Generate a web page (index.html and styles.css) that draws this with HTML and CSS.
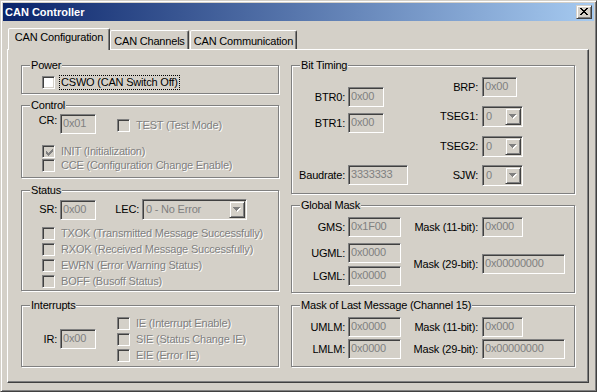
FILE: index.html
```html
<!DOCTYPE html>
<html lang="en">
<head>
    <meta charset="UTF-8">
    <title>CAN Controller</title>
    <link rel="stylesheet" href="styles.css">
</head>
<body>
    <div class="window">
        <div class="titlebar">
            <span class="title">CAN Controller</span>
            <span class="close">
                <svg width="8" height="7" viewBox="0 0 8 7" shape-rendering="crispEdges">
                    <path fill="#000" d="M0 0h2v1H0zM6 0h2v1H6zM1 1h2v1H1zM5 1h2v1H5zM2 2h4v1H2zM3 3h2v1H3zM2 4h4v1H2zM1 5h2v1H1zM5 5h2v1H5zM0 6h2v1H0zM6 6h2v1H6z"/>
                </svg>
            </span>
        </div>

        <div class="client">
            <div class="tabs">
                <div class="tab active tab-config">CAN Configuration</div>
                <div class="tab tab-channels">CAN Channels</div>
                <div class="tab tab-comm">CAN Communication</div>
            </div>

            <div class="panel">
                <!-- left column -->
                <div class="col col-left">
                    <fieldset class="group power">
                        <legend>Power</legend>
                        <div class="body">
                            <label class="chk">
                                <span class="box"></span>
                                <span class="text focus">CSWO (CAN Switch Off)</span>
                            </label>
                        </div>
                    </fieldset>

                    <fieldset class="group control">
                        <legend>Control</legend>
                        <div class="body">
                            <div class="row">
                                <span class="lbl lbl-s">CR:</span>
                                <span class="edit w-36">0x01</span>
                                <label class="chk off test">
                                    <span class="box"></span>
                                    <span class="text">TEST (Test Mode)</span>
                                </label>
                            </div>
                            <div class="list tight">
                                <label class="chk off">
                                    <span class="box"><svg class="tick" width="7" height="7" viewBox="0 0 7 7" shape-rendering="crispEdges"><path d="M0 2h1v3H0zM1 3h1v3H1zM2 4h1v3H2zM3 3h1v3H3zM4 2h1v3H4zM5 1h1v3H5zM6 0h1v3H6z"/></svg></span>
                                    <span class="text">INIT (Initialization)</span>
                                </label>
                                <label class="chk off">
                                    <span class="box"></span>
                                    <span class="text">CCE (Configuration Change Enable)</span>
                                </label>
                            </div>
                        </div>
                    </fieldset>

                    <fieldset class="group status">
                        <legend>Status</legend>
                        <div class="body">
                            <div class="row">
                                <span class="lbl lbl-s">SR:</span>
                                <span class="edit w-36">0x00</span>
                                <span class="lbl lbl-lec">LEC:</span>
                                <span class="combo w-105">
                                    <span class="val">0 - No Error</span>
                                    <span class="drop"><svg width="8" height="5" viewBox="0 0 8 5" shape-rendering="crispEdges"><path class="hi" transform="translate(1 1)" d="M0 0h7v1h-1v1h-1v1h-1v1h-1v-1h-1v-1h-1v-1h-1z"/><path class="lo" d="M0 0h7v1h-1v1h-1v1h-1v1h-1v-1h-1v-1h-1v-1h-1z"/></svg></span>
                                </span>
                            </div>
                            <div class="list wide">
                                <label class="chk off"><span class="box"></span><span class="text">TXOK (Transmitted Message Successfully)</span></label>
                                <label class="chk off"><span class="box"></span><span class="text">RXOK (Received Message Successfully)</span></label>
                                <label class="chk off"><span class="box"></span><span class="text">EWRN (Error Warning Status)</span></label>
                                <label class="chk off"><span class="box"></span><span class="text">BOFF (Busoff Status)</span></label>
                            </div>
                        </div>
                    </fieldset>

                    <fieldset class="group interrupts">
                        <legend>Interrupts</legend>
                        <div class="body">
                            <div class="row">
                                <span class="lbl lbl-s">IR:</span>
                                <span class="edit w-36">0x00</span>
                            </div>
                            <div class="list wide irq">
                                <label class="chk off"><span class="box"></span><span class="text">IE (Interrupt Enable)</span></label>
                                <label class="chk off"><span class="box"></span><span class="text">SIE (Status Change IE)</span></label>
                                <label class="chk off"><span class="box"></span><span class="text">EIE (Error IE)</span></label>
                            </div>
                        </div>
                    </fieldset>
                </div>

                <!-- right column -->
                <div class="col col-right">
                    <fieldset class="group timing">
                        <legend>Bit Timing</legend>
                        <div class="body">
                            <div class="sub sub-left">
                                <div class="row r-btr0"><span class="lbl lbl-m">BTR0:</span><span class="edit w-36">0x00</span></div>
                                <div class="row r-btr1"><span class="lbl lbl-m">BTR1:</span><span class="edit w-36">0x00</span></div>
                                <div class="row r-baud"><span class="lbl lbl-m">Baudrate:</span><span class="edit w-60">3333333</span></div>
                            </div>
                            <div class="sub sub-right">
                                <div class="row r-brp"><span class="lbl lbl-r">BRP:</span><span class="edit w-35">0x00</span></div>
                                <div class="row r-seg"><span class="lbl lbl-r">TSEG1:</span><span class="combo w-41"><span class="val">0</span><span class="drop"><svg width="8" height="5" viewBox="0 0 8 5" shape-rendering="crispEdges"><path class="hi" transform="translate(1 1)" d="M0 0h7v1h-1v1h-1v1h-1v1h-1v-1h-1v-1h-1v-1h-1z"/><path class="lo" d="M0 0h7v1h-1v1h-1v1h-1v1h-1v-1h-1v-1h-1v-1h-1z"/></svg></span></span></div>
                                <div class="row r-seg"><span class="lbl lbl-r">TSEG2:</span><span class="combo w-41"><span class="val">0</span><span class="drop"><svg width="8" height="5" viewBox="0 0 8 5" shape-rendering="crispEdges"><path class="hi" transform="translate(1 1)" d="M0 0h7v1h-1v1h-1v1h-1v1h-1v-1h-1v-1h-1v-1h-1z"/><path class="lo" d="M0 0h7v1h-1v1h-1v1h-1v1h-1v-1h-1v-1h-1v-1h-1z"/></svg></span></span></div>
                                <div class="row r-sjw"><span class="lbl lbl-r">SJW:</span><span class="combo w-41"><span class="val">0</span><span class="drop"><svg width="8" height="5" viewBox="0 0 8 5" shape-rendering="crispEdges"><path class="hi" transform="translate(1 1)" d="M0 0h7v1h-1v1h-1v1h-1v1h-1v-1h-1v-1h-1v-1h-1z"/><path class="lo" d="M0 0h7v1h-1v1h-1v1h-1v1h-1v-1h-1v-1h-1v-1h-1z"/></svg></span></span></div>
                            </div>
                        </div>
                    </fieldset>

                    <fieldset class="group global">
                        <legend>Global Mask</legend>
                        <div class="body">
                            <div class="sub sub-left">
                                <div class="row r-gms"><span class="lbl lbl-m">GMS:</span><span class="edit w-53">0x1F00</span></div>
                                <div class="row r-ugml"><span class="lbl lbl-m">UGML:</span><span class="edit w-53">0x0000</span></div>
                                <div class="row r-lgml"><span class="lbl lbl-m">LGML:</span><span class="edit w-53">0x0000</span></div>
                            </div>
                            <div class="sub sub-right">
                                <div class="row r-m11"><span class="lbl lbl-r">Mask (11-bit):</span><span class="edit w-41">0x000</span></div>
                                <div class="row r-m29"><span class="lbl lbl-r">Mask (29-bit):</span><span class="edit w-83">0x00000000</span></div>
                            </div>
                        </div>
                    </fieldset>

                    <fieldset class="group last">
                        <legend>Mask of Last Message (Channel 15)</legend>
                        <div class="body">
                            <div class="sub sub-left">
                                <div class="row r-first"><span class="lbl lbl-m">UMLM:</span><span class="edit w-53">0x0000</span></div>
                                <div class="row r-second"><span class="lbl lbl-m">LMLM:</span><span class="edit w-53">0x0000</span></div>
                            </div>
                            <div class="sub sub-right">
                                <div class="row r-first"><span class="lbl lbl-r">Mask (11-bit):</span><span class="edit w-41">0x000</span></div>
                                <div class="row r-second"><span class="lbl lbl-r">Mask (29-bit):</span><span class="edit w-83">0x00000000</span></div>
                            </div>
                        </div>
                    </fieldset>
                </div>
            </div>
        </div>
    </div>
</body>
</html>
```

FILE: styles.css
```css
:root {
    --face: #D4D0C8;
    --shadow: #808080;
    --dark: #404040;
    --light: #FFFFFF;
    --gray-text: #808080;
}

* {
    box-sizing: border-box;
}

body {
    margin: 0;
    background-color: var(--face);
    font-family: 'Liberation Sans', Arial, sans-serif;
    font-size: 11px;
    letter-spacing: -0.2px;
    color: #000;
}

/* window frame */
.window {
    width: 597px;
    height: 392px;
    padding: 2px;
    border: 1px solid;
    border-color: var(--face) var(--dark) var(--dark) var(--face);
    box-shadow: inset 1px 1px 0 var(--light), inset -1px -1px 0 var(--shadow);
    background-color: var(--face);
    display: flex;
    flex-direction: column;
}

.titlebar {
    height: 18px;
    display: flex;
    align-items: center;
    padding-left: 2px;
    background: linear-gradient(to right, #0A246A, #A6CAF0);
}

.title {
    color: #fff;
    font-weight: bold;
    line-height: 13px;
    letter-spacing: 0;
}

.close {
    margin-left: auto;
    margin-right: 2px;
    width: 16px;
    height: 14px;
    display: flex;
    align-items: center;
    justify-content: center;
    background-color: var(--face);
    border: 1px solid;
    border-color: var(--face) var(--dark) var(--dark) var(--face);
    box-shadow: inset 1px 1px 0 var(--light), inset -1px -1px 0 var(--shadow);
}

.close svg {
    display: block;
    margin-top: -1px;
}

.client {
    padding-left: 4px;
}

/* tabs */
.tabs {
    height: 28px;
    display: flex;
    align-items: flex-end;
    padding-left: 1px;
}

.tab {
    height: 19px;
    padding-top: 4px;
    line-height: 13px;
    text-align: center;
    border: 1px solid;
    border-bottom: none;
    border-color: var(--light) var(--dark) transparent var(--light);
    border-radius: 2px 2px 0 0;
    box-shadow: inset -1px 0 0 var(--shadow);
    background-color: var(--face);
}

.tab.active {
    height: 22px;
    margin-bottom: -1px;
    padding-top: 2px;
    position: relative;
    z-index: 1;
}

.tab-config { width: 102px; }
.tab-channels { width: 79px; }
.tab-comm { width: 107px; margin-left: 1px; }

.panel {
    width: 582px;
    height: 334px;
    padding: 9px 0 0 13px;
    border: 1px solid;
    border-color: var(--light) var(--dark) var(--dark) var(--light);
    box-shadow: inset -1px -1px 0 var(--shadow);
    display: flex;
    gap: 12px;
}

.col {
    display: flex;
    flex-direction: column;
}

.col-left { width: 258px; }
.col-right { width: 284px; }

/* group boxes */
.group {
    margin: 0;
    padding: 0;
    min-width: 0;
    border: 1px solid var(--shadow);
    box-shadow: 1px 1px 0 var(--light), inset 1px 1px 0 var(--light);
}

.group legend {
    margin-left: 8px;
    padding: 0 1px;
    line-height: 13px;
    background-color: var(--face);
}

.power { height: 35px; }
.control { height: 79px; margin-top: 5px; }
.status { height: 107px; margin-top: 6px; }
.interrupts { height: 68px; margin-top: 8px; }

.timing { height: 135px; }
.global { height: 94px; margin-top: 5px; }
.last { height: 68px; margin-top: 6px; }

.power .body {
    padding: 4px 0 0 20px;
}

.control .body,
.status .body {
    padding-top: 2px;
}

.row {
    display: flex;
    align-items: center;
}

.lbl {
    flex: none;
    text-align: right;
    margin-right: 3px;
    line-height: 13px;
    white-space: nowrap;
}

.lbl-s { width: 35px; }
.lbl-lec { width: 43px; }
.lbl-m { width: 53px; }
.lbl-r { width: 68px; margin-right: 4px; }

/* checkboxes */
.chk {
    display: flex;
    align-items: center;
    height: 13px;
}

.box {
    flex: none;
    width: 13px;
    height: 13px;
    padding: 2px;
    border: 1px solid;
    border-color: var(--shadow) var(--light) var(--light) var(--shadow);
    box-shadow: inset 1px 1px 0 var(--dark), inset -1px -1px 0 var(--face);
    background-color: #fff;
}

.tick {
    display: block;
    margin: 1px 0 0 1px;
    fill: var(--gray-text);
}

.chk .text {
    margin-left: 5px;
    padding: 0 1px;
    line-height: 13px;
    white-space: nowrap;
}

.chk .focus {
    outline: 1px dotted #000;
}

.chk.off .box {
    background-color: var(--face);
}

.chk.off .text {
    color: var(--gray-text);
    text-shadow: 1px 1px 0 var(--light);
}

.control .row {
    align-items: flex-start;
}

.chk.test {
    margin: 5px 0 0 21px;
}

.list {
    display: flex;
    flex-direction: column;
    padding-left: 20px;
}

.list.tight {
    margin-top: 11px;
    gap: 1px;
}

.list.wide {
    margin-top: 7px;
    gap: 3px;
}

/* edits and combos */
.edit {
    flex: none;
    height: 20px;
    padding: 0 2px;
    line-height: 17px;
    border: 1px solid;
    border-color: var(--shadow) var(--light) var(--light) var(--shadow);
    box-shadow: inset 1px 1px 0 var(--dark), inset -1px -1px 0 var(--face);
    color: var(--gray-text);
    white-space: nowrap;
    overflow: hidden;
}

.w-35 { width: 35px; }
.w-36 { width: 36px; }
.w-41 { width: 41px; }
.w-53 { width: 53px; }
.w-60 { width: 60px; }
.w-83 { width: 83px; }
.w-105 { width: 105px; }

.combo {
    flex: none;
    height: 21px;
    padding: 1px;
    display: flex;
    border: 1px solid;
    border-color: var(--shadow) var(--light) var(--light) var(--shadow);
    box-shadow: inset 1px 1px 0 var(--dark), inset -1px -1px 0 var(--face);
    color: var(--gray-text);
}

.combo .val {
    flex: 1;
    padding-left: 2px;
    line-height: 17px;
    white-space: nowrap;
}

.combo .drop {
    width: 16px;
    height: 17px;
    display: flex;
    align-items: center;
    justify-content: center;
    border: 1px solid;
    border-color: var(--face) var(--dark) var(--dark) var(--face);
    box-shadow: inset 1px 1px 0 var(--light), inset -1px -1px 0 var(--shadow);
}

.drop svg {
    display: block;
}

.drop .hi { fill: var(--light); }
.drop .lo { fill: var(--gray-text); }

/* interrupts */
.interrupts .body {
    height: 54px;
    display: flex;
    align-items: center;
}

.list.irq {
    margin: 0 0 0 21px;
    padding-left: 0;
}

/* right column groups */
.timing .body,
.global .body,
.last .body {
    display: flex;
}

.sub {
    display: flex;
    flex-direction: column;
}

.sub-left { width: 118px; }

.r-btr0 { margin-top: 15px; }
.r-btr1 { margin-top: 6px; }
.r-baud { margin-top: 32px; }

.r-brp { margin-top: 5px; }
.r-seg { margin-top: 9px; }
.r-sjw { margin-top: 8px; }

.r-gms { margin-top: 5px; }
.r-ugml { margin-top: 6px; }
.r-lgml { margin-top: 3px; }
.r-m11 { margin-top: 5px; }
.r-m29 { margin-top: 17px; }

.r-first { margin-top: 5px; }
.r-second { margin-top: 2px; }
```
